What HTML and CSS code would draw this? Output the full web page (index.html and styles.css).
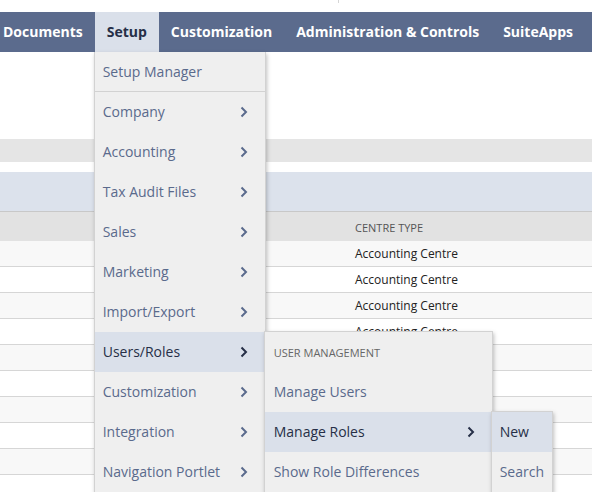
FILE: index.html
```html
<!DOCTYPE html>
<html>
<head>
<meta charset="utf-8">
<link rel="stylesheet" href="styles.css">
</head>
<body>
<div class="topstrip"><span class="tick"></span></div>
<nav class="nav">
  <div class="tab">Documents</div>
  <div class="tab active">Setup
    <ul class="menu m1">
      <li class="item first">Setup Manager</li>
      <li class="item">Company<svg class="chev" viewBox="0 0 8 12"><path d="M1.5 1.5 L6 6 L1.5 10.5"/></svg></li>
      <li class="item">Accounting<svg class="chev" viewBox="0 0 8 12"><path d="M1.5 1.5 L6 6 L1.5 10.5"/></svg></li>
      <li class="item">Tax Audit Files<svg class="chev" viewBox="0 0 8 12"><path d="M1.5 1.5 L6 6 L1.5 10.5"/></svg></li>
      <li class="item">Sales<svg class="chev" viewBox="0 0 8 12"><path d="M1.5 1.5 L6 6 L1.5 10.5"/></svg></li>
      <li class="item">Marketing<svg class="chev" viewBox="0 0 8 12"><path d="M1.5 1.5 L6 6 L1.5 10.5"/></svg></li>
      <li class="item">Import/Export<svg class="chev" viewBox="0 0 8 12"><path d="M1.5 1.5 L6 6 L1.5 10.5"/></svg></li>
      <li class="item hot">Users/Roles<svg class="chev" viewBox="0 0 8 12"><path d="M1.5 1.5 L6 6 L1.5 10.5"/></svg>
        <ul class="menu m2">
          <li class="section">USER MANAGEMENT</li>
          <li class="item">Manage Users</li>
          <li class="item hot">Manage Roles<svg class="chev" viewBox="0 0 8 12"><path d="M1.5 1.5 L6 6 L1.5 10.5"/></svg>
            <ul class="menu m3">
              <li class="item hot">New</li>
              <li class="item">Search</li>
            </ul>
          </li>
          <li class="item">Show Role Differences</li>
        </ul>
      </li>
      <li class="item">Customization<svg class="chev" viewBox="0 0 8 12"><path d="M1.5 1.5 L6 6 L1.5 10.5"/></svg></li>
      <li class="item">Integration<svg class="chev" viewBox="0 0 8 12"><path d="M1.5 1.5 L6 6 L1.5 10.5"/></svg></li>
      <li class="item">Navigation Portlet<svg class="chev" viewBox="0 0 8 12"><path d="M1.5 1.5 L6 6 L1.5 10.5"/></svg></li>
    </ul>
  </div>
  <div class="tab">Customization</div>
  <div class="tab">Administration &amp; Controls</div>
  <div class="tab">SuiteApps</div>
</nav>
<main class="content">
  <div class="spacer"></div>
  <div class="greyband"></div>
  <div class="gap"></div>
  <div class="blueband"></div>
  <div class="table">
    <div class="row head"><span class="cell">CENTRE TYPE</span></div>
    <div class="row alt"><span class="cell">Accounting Centre</span></div>
    <div class="row"><span class="cell">Accounting Centre</span></div>
    <div class="row alt"><span class="cell">Accounting Centre</span></div>
    <div class="row"><span class="cell">Accounting Centre</span></div>
    <div class="row alt"><span class="cell"></span></div>
    <div class="row"><span class="cell"></span></div>
    <div class="row alt"><span class="cell"></span></div>
    <div class="row"><span class="cell"></span></div>
    <div class="row alt"><span class="cell"></span></div>
  </div>
</main>
</body>
</html>
```
FILE: styles.css
```css
* { box-sizing: border-box; }
html, body { margin: 0; padding: 0; }
body {
  width: 592px;
  height: 492px;
  overflow: hidden;
  background: #fff;
  font-family: "Open Sans", "Liberation Sans", sans-serif;
}
.topstrip {
  height: 12px;
  position: relative;
}
.tick {
  position: absolute;
  left: 338px;
  top: 0;
  width: 1px;
  height: 3px;
  background: #d6d6d6;
}
.nav {
  height: 40px;
  background: #5b6b8d;
  display: flex;
  margin-left: -9px;
  position: relative;
  z-index: 5;
}
.tab {
  position: relative;
  padding: 0 12px;
  line-height: 40px;
  font-size: 14px;
  font-weight: 700;
  color: #fff;
  white-space: nowrap;
}
.tab.active {
  background: #dae0ea;
  color: #262f47;
}
.menu {
  list-style: none;
  margin: 0;
  padding: 0;
  position: absolute;
  background: #efefef;
  border: 1px solid #d2d2d2;
  box-shadow: 1px 2px 4px rgba(0,0,0,0.25);
  font-weight: 400;
}
.m1 {
  left: -1px;
  top: 40px;
  width: 172px;
  border-top: none;
}
.m2 {
  left: 100%;
  top: -1px;
  width: 229px;
  margin-left: -1px;
}
.m3 {
  left: 100%;
  top: -1px;
  width: 62px;
  margin-left: -1px;
}
.item {
  position: relative;
  height: 40px;
  line-height: 40px;
  padding: 0 8px;
  font-size: 14px;
  color: #5a6a8c;
  display: flex;
  align-items: center;
  justify-content: space-between;
  white-space: nowrap;
}
.item.first {
  border-bottom: 1px solid #d2d2d2;
}
.item.hot {
  background: #dae0ea;
  color: #262f47;
}
.m2 .item, .m2 .section { padding-left: 9px; }
.section {
  height: 40px;
  line-height: 42px;
  padding: 0 9px;
  font-size: 11px;
  color: #666;
}
.chev {
  width: 8px;
  height: 12px;
  margin-right: 9px;
  fill: none;
  stroke: #5a6a8c;
  stroke-width: 2;
}
.hot > .chev { stroke: #262f47; }
.m3 .item { padding-left: 8px; }

.content { display: flex; flex-direction: column; }
.spacer { height: 87px; }
.greyband { height: 23px; background: #e5e5e5; }
.gap { height: 10px; }
.blueband { height: 40px; background: #dce2ec; border-bottom: 1px solid #c8c8c8; }
.table { display: flex; flex-direction: column; }
.row {
  height: 26px;
  border-bottom: 1px solid #d6d6d6;
  display: flex;
  align-items: center;
  padding-left: 355px;
  font-size: 12px;
  color: #222;
  background: #fff;
}
.row.alt { background: #f8f8f8; }
.row.head {
  height: 29px;
  background: #e2e2e2;
  border-bottom: none;
  font-size: 11px;
  color: #555;
  padding-top: 2px;
}
```
